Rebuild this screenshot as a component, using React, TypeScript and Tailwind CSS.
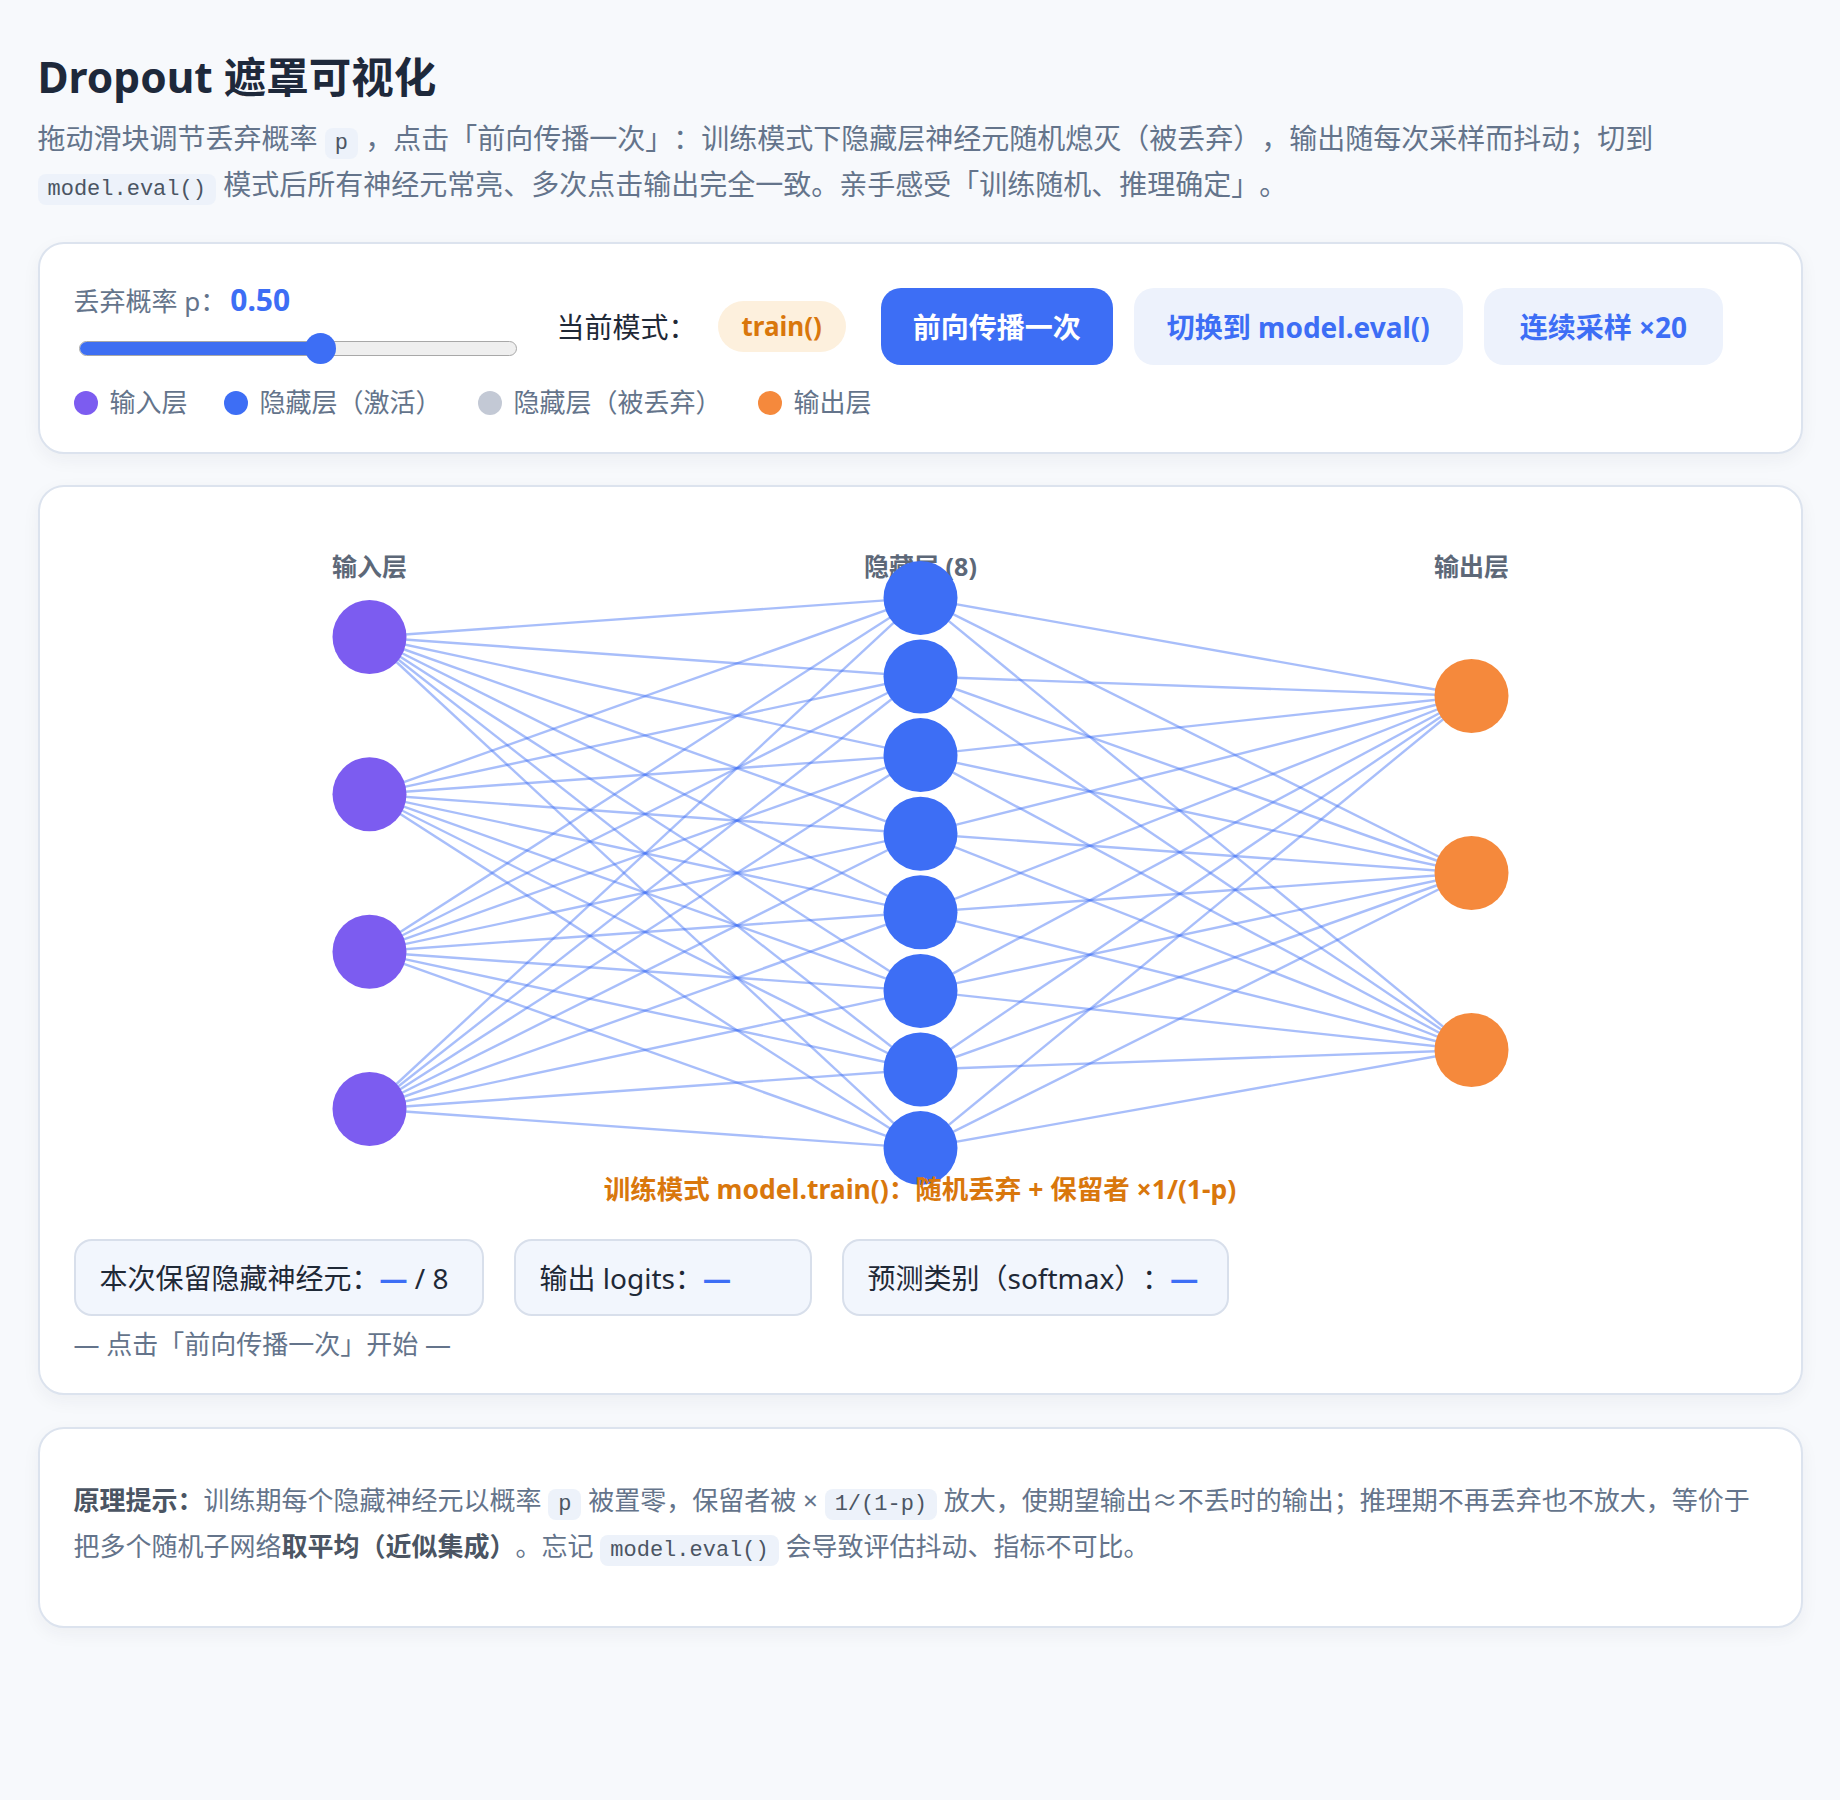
import React, { useState } from "react";

// node positions inside the network svg (px, the svg is drawn 1:1)
const INPUT_X = 295;
const HIDDEN_X = 846;
const OUTPUT_X = 1397;
const RADIUS = 37;

const inputYs = [115, 272.3, 429.7, 587];
const hiddenYs = [75.9, 154.5, 233.1, 311.7, 390.3, 468.9, 547.5, 626.1];
const outputYs = [174, 351, 528];

type Mode = "train" | "eval";

// small inline code chip
function Code({ children }: { children: React.ReactNode }) {
  return (
    <code className="rounded-[8px] bg-[#edf2fa] px-[10px] py-[3px] font-['Liberation_Mono',monospace] text-[22px] leading-none text-[#4b5563]">
      {children}
    </code>
  );
}

function LegendItem({ color, label }: { color: string; label: string }) {
  return (
    <div className="flex items-center gap-[12px]">
      <span className={`h-[24px] w-[24px] rounded-full ${color}`} />
      <span>{label}</span>
    </div>
  );
}

export default function App() {
  const [p] = useState(0.5);
  const [mode, setMode] = useState<Mode>("train");

  // null means nothing sampled yet -> every hidden neuron drawn as active
  const [mask, setMask] = useState<boolean[] | null>(null);
  const [logits, setLogits] = useState<number[] | null>(null);

  const forward = () => {
    const m = hiddenYs.map(() => (mode === "train" ? Math.random() >= p : true));
    setMask(m);
    const scale = mode === "train" ? 1 / (1 - p) : 1;
    const out = outputYs.map((_, k) =>
      m.reduce((s, on, j) => s + (on ? Math.sin(j * 1.7 + k * 2.3) * scale : 0), 0)
    );
    setLogits(out.map((v) => Math.round(v * 100) / 100));
  };

  const toggleMode = () => {
    setMode((prev) => (prev === "train" ? "eval" : "train"));
    setMask(null);
    setLogits(null);
  };

  const kept = mask ? mask.filter(Boolean).length : null;
  const predicted = logits ? logits.indexOf(Math.max(...logits)) : null;
  const isOn = (j: number) => (mask ? mask[j] : true);

  return (
    <div className="min-h-screen bg-[#f7f9fc] px-[37.5px] pt-[52px] pb-[80px] font-['Noto_Sans','Noto_Sans_CJK_SC',sans-serif] [text-spacing-trim:space-all]">
      <h1 className="text-[42.5px] font-bold leading-[50px] text-[#1e293b]">Dropout 遮罩可视化</h1>
      <p className="mt-[13px] text-[28px] leading-[46px] text-[#64748b]">
        拖动滑块调节丢弃概率 <Code>p</Code> ，点击「前向传播一次」：训练模式下隐藏层神经元随机熄灭（被丢弃），输出随每次采样而抖动；切到 <Code>model.eval()</Code> 模式后所有神经元常亮、多次点击输出完全一致。亲手感受「训练随机、推理确定」。
      </p>

      {/* controls */}
      <div className="mt-[35px] rounded-[26px] border-2 border-[#dce3ee] bg-white px-[34px] pt-[35px] pb-[30px] shadow-[0_6px_18px_rgba(30,41,59,0.05)]">
        <div className="flex items-center gap-[21px]">
          <div className="w-[462px] pb-[10px]">
            <div className="text-[26px] leading-[41px] text-[#64748b]">
              丢弃概率 p：<span className="ml-[4px] text-[30px] font-bold text-[#3d6ef5]">{p.toFixed(2)}</span>
            </div>
            <div className="relative ml-[5px] mt-[11px] flex h-[31px] w-[438px] items-center">
              <div className="relative h-[15px] w-full overflow-hidden rounded-full border border-[#a8a8a8] bg-[#efefef]">
                <div className="absolute inset-y-0 left-0 w-[242px] bg-[#3d6ef2]" />
              </div>
              <div className="absolute left-[226px] top-0 h-[31px] w-[31px] rounded-full bg-[#3d6ef5]" />
            </div>
          </div>

          <span className="text-[28px] leading-[42px] text-[#1f2937]">当前模式：</span>
          <span className="rounded-full bg-[#fdf0dd] px-[24px] py-[6px] text-[26px] font-bold leading-[39px] text-[#d9770c]">
            {mode === "train" ? "train()" : "eval()"}
          </span>

          <button
            onClick={forward}
            className="ml-[14px] rounded-[20px] bg-[#3d6ef5] px-[32px] py-[17.5px] text-[28px] font-bold leading-[42px] text-white"
          >
            前向传播一次
          </button>
          <button
            onClick={toggleMode}
            className="rounded-[20px] bg-[#edf2fc] px-[33px] py-[17.5px] text-[28px] font-bold leading-[42px] text-[#3d6ef5]"
          >
            {mode === "train" ? "切换到 model.eval()" : "切换到 model.train()"}
          </button>
          <button
            onClick={forward}
            className="rounded-[20px] bg-[#edf2fc] px-[36px] py-[17.5px] text-[28px] font-bold leading-[42px] text-[#3d6ef5]"
          >
            连续采样 ×20
          </button>
        </div>

        <div className="mt-[9px] flex items-center gap-[36px] text-[26px] leading-[39px] text-[#64748b]">
          <LegendItem color="bg-[#7c5cf0]" label="输入层" />
          <LegendItem color="bg-[#3d6ef5]" label="隐藏层（激活）" />
          <LegendItem color="bg-[#c3c9d5]" label="隐藏层（被丢弃）" />
          <LegendItem color="bg-[#f5893c]" label="输出层" />
        </div>
      </div>

      {/* network */}
      <div className="mt-[31px] rounded-[26px] border-2 border-[#dce3ee] bg-white px-[34px] pt-[35px] pb-[29px] shadow-[0_6px_18px_rgba(30,41,59,0.05)]">
        <svg width="1692" height="649" viewBox="0 0 1692 649" className="block w-full overflow-visible">
          <g fill="#5d6878" fontSize="25" fontWeight="700" textAnchor="middle">
            <text x={INPUT_X} y="54">输入层</text>
            <text x={HIDDEN_X} y="54">隐藏层 (8)</text>
            <text x={OUTPUT_X} y="54">输出层</text>
          </g>

          {/* connections */}
          <g stroke="#3d6ef5" strokeWidth="2.4">
            {inputYs.map((iy, i) =>
              hiddenYs.map((hy, j) => (
                <line key={`ih-${i}-${j}`} x1={INPUT_X} y1={iy} x2={HIDDEN_X} y2={hy} strokeOpacity={isOn(j) ? 0.45 : 0.08} />
              ))
            )}
            {hiddenYs.map((hy, j) =>
              outputYs.map((oy, k) => (
                <line key={`ho-${j}-${k}`} x1={HIDDEN_X} y1={hy} x2={OUTPUT_X} y2={oy} strokeOpacity={isOn(j) ? 0.45 : 0.08} />
              ))
            )}
          </g>

          {inputYs.map((y, i) => (
            <circle key={`in-${i}`} cx={INPUT_X} cy={y} r={RADIUS} fill="#7c5cf0" />
          ))}
          {hiddenYs.map((y, j) => (
            <circle key={`hid-${j}`} cx={HIDDEN_X} cy={y} r={RADIUS} fill={isOn(j) ? "#3d6ef5" : "#c3c9d5"} />
          ))}
          {outputYs.map((y, k) => (
            <circle key={`out-${k}`} cx={OUTPUT_X} cy={y} r={RADIUS} fill="#f5893c" />
          ))}
        </svg>

        <div className="relative text-center text-[26.5px] font-bold leading-[36px] text-[#d9770c]">
          {mode === "train"
            ? "训练模式 model.train()：随机丢弃 + 保留者 ×1/(1-p)"
            : "推理模式 model.eval()：不丢弃、不缩放"}
        </div>

        <div className="mt-[32px] flex gap-[30px]">
          <div className="min-w-[410px] rounded-[18px] border-2 border-[#d8dfeb] bg-[#f2f6fd] px-[24px] py-[15.5px] text-[28px] leading-[42px] text-[#1f2937]">
            本次保留隐藏神经元：<span className="font-bold text-[#3d6ef5]">{kept ?? "—"}</span> / 8
          </div>
          <div className="min-w-[298px] rounded-[18px] border-2 border-[#d8dfeb] bg-[#f2f6fd] px-[24px] py-[15.5px] text-[28px] leading-[42px] text-[#1f2937]">
            输出 logits：<span className="font-bold text-[#3d6ef5]">{logits ? logits.join(", ") : "—"}</span>
          </div>
          <div className="min-w-[387px] rounded-[18px] border-2 border-[#d8dfeb] bg-[#f2f6fd] px-[24px] py-[15.5px] text-[28px] leading-[42px] text-[#1f2937]">
            预测类别（softmax）：<span className="font-bold text-[#3d6ef5]">{predicted ?? "—"}</span>
          </div>
        </div>
        <div className="mt-[9px] text-[26px] leading-[39px] text-[#64748b]">— 点击「前向传播一次」开始 —</div>
      </div>

      {/* explanation */}
      <div className="mt-[32px] rounded-[26px] border-2 border-[#dce3ee] bg-white px-[34px] pt-[49px] pb-[57px] shadow-[0_6px_18px_rgba(30,41,59,0.05)]">
        <p className="text-[26px] leading-[45.5px] text-[#64748b]">
          <b className="font-bold text-[#4b5563]">原理提示：</b>训练期每个隐藏神经元以概率 <Code>p</Code> 被置零，保留者被 × <Code>1/(1-p)</Code> 放大，使期望输出≈不丢时的输出；推理期不再丢弃也不放大，等价于把多个随机子网络<b className="font-bold text-[#4b5563]">取平均（近似集成）</b>。忘记 <Code>model.eval()</Code> 会导致评估抖动、指标不可比。
        </p>
      </div>
    </div>
  );
}
